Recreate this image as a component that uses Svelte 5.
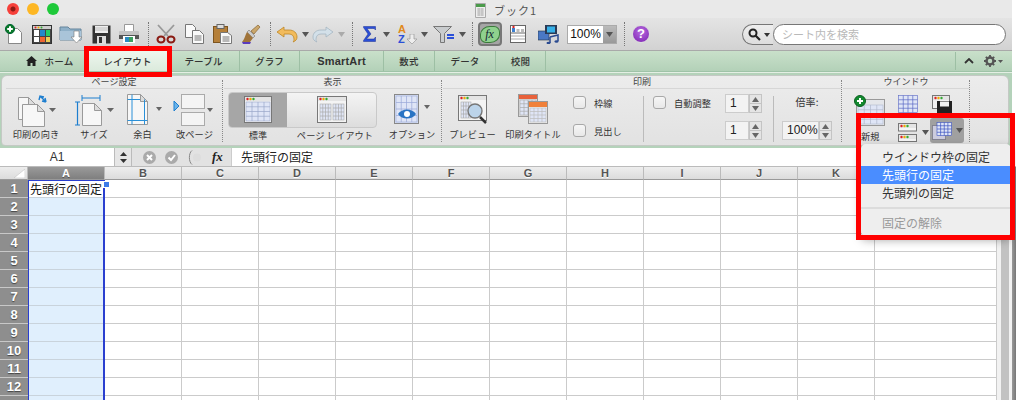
<script>
  const tabs = [
    { label: 'ホーム', cls: 'home' },
    { label: 'レイアウト', cls: 'active' },
    { label: 'テーブル', cls: 'w72' },
    { label: 'グラフ', cls: 'w60' },
    { label: 'SmartArt', cls: 'w84' },
    { label: '数式', cls: 'w51' },
    { label: 'データ', cls: 'w61' },
    { label: '校閲', cls: 'w50' }
  ];
  const cols = ['A', 'B', 'C', 'D', 'E', 'F', 'G', 'H', 'I', 'J', 'K', 'L'];
  const rows = [1, 2, 3, 4, 5, 6, 7, 8, 9, 10, 11, 12, 13];
</script>

{#snippet caret()}
  <svg class="caret" width="7" height="5" viewBox="0 0 7 5"><path d="M0 0h7L3.5 5z" fill="#555" /></svg>
{/snippet}

{#snippet stepper()}
  <div class="stepper">
    <span><svg width="7" height="5" viewBox="0 0 7 5"><path d="M0 5h7L3.5 0z" fill="#666" /></svg></span>
    <span><svg width="7" height="5" viewBox="0 0 7 5"><path d="M0 0h7L3.5 5z" fill="#666" /></svg></span>
  </div>
{/snippet}

{#snippet page(x, y, w, h)}
  <path d="M{x} {y}h{w - 7}l7 7v{h - 7}h-{w}z" fill="#f7f7f7" stroke="#9a9a9a" />
  <path d="M{x + w - 7} {y}v7h7z" fill="#ddd" stroke="#9a9a9a" />
{/snippet}

{#snippet miniWin(x, y, w, h)}
  <rect x={x} y={y} width={w} height={h} fill="#f4f4f4" stroke="#777" />
  <rect x={x + 0.5} y={y + 0.5} width={w - 1} height="4" fill="#e4e4e4" />
  <circle cx={x + 3} cy={y + 2.5} r="1.2" fill="#d22" />
  <circle cx={x + 6} cy={y + 2.5} r="1.2" fill="#ea0" />
  <circle cx={x + 9} cy={y + 2.5} r="1.2" fill="#3a3" />
{/snippet}

{#snippet sheet(x, y, w, h, c)}
  <rect x={x} y={y} width={w} height={h} fill="#dfe5f6" stroke={c} stroke-width="0.6" />
  {#each [0.25, 0.5, 0.75] as f}
    <path d="M{x} {y + h * f}h{w}M{x + w * f} {y}v{h}" stroke={c} stroke-width="0.7" />
  {/each}
{/snippet}

<div class="window">
  <header class="titlebar">
    <div class="lights">
      <i class="l-red"></i><i class="l-yellow"></i><i class="l-green"></i>
    </div>
    <div class="title">
      <svg width="11" height="15" viewBox="0 0 11 15">
        <path d="M.5.5h10v14H.5z" fill="#eee" stroke="#aaa" />
        <path d="M1 1h9v3H1z" fill="#4a9a4a" />
        <path d="M2 6h7M2 8h7M2 10h7M2 12h7M4 5v8M7 5v8" stroke="#aaa" stroke-width=".7" />
      </svg>
      <span>ブック1</span>
    </div>
    <div></div>
  </header>

  <div class="toolbar">
    <!-- new -->
    <div class="tool">
      <svg width="18" height="20" viewBox="0 0 18 20">
        <path d="M3.5 4.5h9l4 4v11h-13z" fill="#fff" stroke="#888" />
        <circle cx="5" cy="5" r="4.6" fill="#0b7a2a" stroke="#063" />
        <path d="M5 2.2v5.6M2.2 5h5.6" stroke="#fff" stroke-width="2" />
      </svg>
    </div>
    <!-- gallery -->
    <div class="tool">
      <svg width="20" height="19" viewBox="0 0 20 19">
        <rect x=".5" y=".5" width="19" height="18" fill="#444" stroke="#333" />
        <rect x="1" y="1" width="18" height="3" fill="#ccc" />
        <circle cx="3.5" cy="2.5" r="1" fill="#d22" /><circle cx="6.5" cy="2.5" r="1" fill="#ea0" /><circle cx="9.5" cy="2.5" r="1" fill="#3a3" />
        <rect x="2" y="5" width="5" height="6" fill="#fff" />
        <rect x="8" y="5" width="5" height="6" fill="#28c" />
        <rect x="14" y="5" width="4" height="6" fill="#2c6" />
        <rect x="2" y="12" width="5" height="5" fill="#fff" />
        <rect x="8" y="12" width="5" height="5" fill="#e63" />
        <rect x="14" y="12" width="4" height="5" fill="#ec5" />
      </svg>
    </div>
    <!-- open -->
    <div class="tool">
      <svg width="26" height="20" viewBox="0 0 26 20">
        <path d="M1 3h8l2 2h11v11H1z" fill="#8fb0c8" stroke="#67859c" />
        <path d="M1 7h21v9H1z" fill="#a9c4d9" />
        <path d="M15 7h5v6h3l-5.500 6L12 13h3z" fill="#fff" stroke="#777" stroke-width=".6" />
      </svg>
    </div>
    <!-- save -->
    <div class="tool">
      <svg width="19" height="19" viewBox="0 0 19 19">
        <path d="M.5.5h18v18H.5z" fill="#333" />
        <path d="M3 1h13v7H3z" fill="#eee" />
        <path d="M3 3h13M3 5h13" stroke="#aaa" stroke-width=".7" />
        <path d="M5 11h9v8H5z" fill="#ddd" /><path d="M7 12h3v6H7z" fill="#333" />
      </svg>
    </div>
    <!-- print -->
    <div class="tool">
      <svg width="20" height="20" viewBox="0 0 20 20">
        <path d="M5.500.5h9v7h-9z" fill="#fff" stroke="#999" />
        <path d="M1 7h18a1 1 0 0 1 1 1v6H0V8a1 1 0 0 1 1-1z" fill="#c4c4c4" />
        <path d="M0 11h20v4H0z" fill="#555" />
        <path d="M4 12h12v7H4z" fill="#fff" />
        <path d="M6 13h4v5H6z" fill="#2a8ac0" /><path d="M10 13h4v5h-4z" fill="#3aa060" />
      </svg>
    </div>
    <div class="dots"></div>
    <!-- cut -->
    <div class="tool">
      <svg width="20" height="20" viewBox="0 0 20 20" fill="none">
        <path d="M2 1l10 11M18 1L8 12" stroke="#999" stroke-width="1.800" />
        <ellipse cx="5" cy="15.500" rx="3.500" ry="3" stroke="#8a1c14" stroke-width="2" />
        <ellipse cx="15" cy="15.500" rx="3.500" ry="3" stroke="#8a1c14" stroke-width="2" />
      </svg>
    </div>
    <!-- copy -->
    <div class="tool">
      <svg width="19" height="20" viewBox="0 0 19 20">
        <path d="M.5.500h7l3 3v10H.5z" fill="#fafafa" stroke="#777" />
        <path d="M7.500 6.500h7l4 4v9h-11z" fill="#fafafa" stroke="#777" />
        <path d="M9.500 12h7M9.500 14h7M9.500 16h7" stroke="#777" />
      </svg>
    </div>
    <!-- paste -->
    <div class="tool">
      <svg width="19" height="20" viewBox="0 0 19 20">
        <rect x=".5" y="2.500" width="14" height="16" fill="#b5803a" stroke="#7d5520" />
        <rect x="4" y=".5" width="7" height="4" fill="#ddd" stroke="#666" />
        <path d="M7.500 8.500h7l4 3v8h-11z" fill="#fafafa" stroke="#777" />
        <path d="M9.500 13h7M9.500 15h7M9.500 17h7" stroke="#777" />
      </svg>
    </div>
    <!-- format brush -->
    <div class="tool">
      <svg width="20" height="20" viewBox="0 0 20 20">
        <path d="M10 7l7-6 2 2-6 7z" fill="#c9a66b" stroke="#7d5520" stroke-width=".6" />
        <path d="M8 6l6 6-2 2-6-6z" fill="#ccc" stroke="#777" stroke-width=".6" />
        <path d="M6 8l6 6-3 4-8 0c3-3 3-7 5-10z" fill="#a0743a" />
        <path d="M1 18h9l-1 2H2z" fill="#5a3bbd" />
      </svg>
    </div>
    <div class="dots"></div>
    <!-- undo -->
    <div class="tool">
      <svg width="22" height="17" viewBox="0 0 22 17">
        <path d="M1 6l7-5v3h5c5 0 8 3 8 7 0 2-1 4-4 5 1-1 1-2 1-3 0-3-2-5-5-5H8v3z" fill="#f2bb5c" stroke="#bd8626" stroke-width=".8" />
      </svg>
    </div>
    <div class="tool">{@render caret()}</div>
    <!-- redo, disabled -->
    <div class="tool">
      <svg width="22" height="17" viewBox="0 0 22 17">
        <path d="M21 6l-7-5v3H9C4 4 1 7 1 11c0 2 1 4 4 5-1-1-1-2-1-3 0-3 2-5 5-5h5v3z" fill="#d3e0e9" stroke="#a6b6c2" stroke-width=".8" />
      </svg>
    </div>
    <div class="tool">
      <svg width="7" height="5" viewBox="0 0 7 5"><path d="M0 0h7L3.500 5z" fill="#aaa" /></svg>
    </div>
    <div class="dots"></div>
    <!-- sigma -->
    <div class="tool">
      <svg width="13" height="16" viewBox="0 0 13 16">
        <path d="M.5.500H12.500V4L11 2.500H4L8 8 3.500 13H11l1.500-2V15.500H.5V14.500L5 8 .5 1.500z" fill="#2a4fd8" stroke="#1a2f90" stroke-width=".5" />
      </svg>
    </div>
    <div class="tool">{@render caret()}</div>
    <!-- sort -->
    <div class="tool sort">
      <span class="a">A</span><span class="z">Z</span>
      <svg width="10" height="10" viewBox="0 0 10 10"><path d="M3 0h4v5h3L5 10 0 5h3z" fill="#eee" stroke="#999" stroke-width=".7" /></svg>
    </div>
    <div class="tool">{@render caret()}</div>
    <!-- filter -->
    <div class="tool">
      <svg width="22" height="17" viewBox="0 0 22 17">
        <path d="M.5.500h18l-7 7v9h-4v-9z" fill="#c9ccce" stroke="#777" />
        <path d="M14 9h7M14 12h7" stroke="#2a4fd8" stroke-width="2" />
      </svg>
    </div>
    <div class="tool">{@render caret()}</div>
    <div class="dots"></div>
    <div class="tool">
      <div class="fx-btn"><span>fx</span></div>
    </div>
    <!-- toolbox -->
    <div class="tool">
      <svg width="16" height="18" viewBox="0 0 16 18">
        <rect x=".5" y=".5" width="15" height="17" fill="#fff" stroke="#666" />
        <path d="M1 8h14" stroke="#666" />
        <path d="M1 11h14M1 14h14" stroke="#aaa" />
        <rect x="2" y="3" width="3" height="4" fill="#3a7fd0" /><rect x="6.500" y="4" width="3" height="3" fill="#bbb" /><rect x="11" y="4" width="3" height="3" fill="#bbb" />
        <circle cx="3.500" cy="2" r="1.200" fill="#d22" />
      </svg>
    </div>
    <!-- media -->
    <div class="tool">
      <svg width="21" height="19" viewBox="0 0 21 19">
        <rect x="0" y="6" width="11" height="9" fill="#4a78c4" stroke="#234" stroke-width=".6" />
        <rect x="7" y="0" width="12" height="9" fill="#2a3a55" />
        <rect x="9" y="1.500" width="8" height="6" fill="#36b0e8" />
        <path d="M12 12l8-2v6M12 12v6" stroke="#2a4a90" stroke-width="1.500" fill="none" />
        <ellipse cx="10.500" cy="18" rx="2" ry="1.200" fill="#2a4a90" /><ellipse cx="18.500" cy="16.500" rx="2" ry="1.200" fill="#2a4a90" />
      </svg>
    </div>
    <div class="combo">
      <span>100%</span>
      <div class="combo-btn">{@render caret()}</div>
    </div>
    <div class="dots"></div>
    <div class="tool">
      <div class="help">?</div>
    </div>
    <div></div>
    <div class="search">
      <div class="search-pill">
        <svg width="15" height="13" viewBox="0 0 15 13" fill="none">
          <circle cx="5" cy="5" r="3.500" stroke="#222" stroke-width="2" />
          <path d="M7.500 7.500L12 12" stroke="#222" stroke-width="2.200" />
        </svg>
        <svg width="6" height="4" viewBox="0 0 6 4"><path d="M0 0h6L3 4z" fill="#333" /></svg>
      </div>
      <div class="search-field">シート内を検索</div>
    </div>
  </div>

  <nav class="tabs">
    {#each tabs as tab}
      <div class="tab {tab.cls}">
        {#if tab.cls === 'home'}
          <svg width="11" height="10" viewBox="0 0 11 10"><path d="M5.500 0L11 5H9.500v5h-3V7h-2v3h-3V5H0z" fill="#222" /></svg>
        {/if}
        <span>{tab.label}</span>
      </div>
    {/each}
    <div class="tabs-end">
      <svg width="10" height="6" viewBox="0 0 10 6" fill="none"><path d="M1 5l4-4 4 4" stroke="#333" stroke-width="1.800" /></svg>
      <div class="gear">
        <svg width="12" height="12" viewBox="0 0 12 12">
          <circle cx="6" cy="6" r="3.500" fill="none" stroke="#555" stroke-width="2.500" />
          <path d="M6 0v12M0 6h12M1.800 1.800l8.400 8.400M10.200 1.800l-8.400 8.400" stroke="#555" stroke-width="1.800" stroke-dasharray="2 8" />
        </svg>
        <svg width="5" height="3" viewBox="0 0 5 3"><path d="M0 0h5L2.500 3z" fill="#555" /></svg>
      </div>
    </div>
  </nav>

  <section class="ribbon-wrap">
    <div class="ribbon">
      <!-- page setup -->
      <div class="group g-page">
        <div class="g-title">ページ設定</div>
        <div class="g-body">
          <div class="item i1">
            <div class="ico">
              <svg width="40" height="34" viewBox="0 0 40 34">
                {@render page(1.500, 3.500, 17, 22)}
                {@render page(5.500, 10.500, 22, 22)}
                <path d="M23 2l5 5M22 6l1-4 4 1M29 8l-1-4M29 8l-4-1" stroke="#1d7ecf" stroke-width="1.400" fill="none" />
                <path d="M32 14h7l-3.500 4z" fill="#666" />
              </svg>
            </div>
            <label>印刷の向き</label>
          </div>
          <div class="item i2">
            <div class="ico">
              <svg width="40" height="34" viewBox="0 0 40 34" fill="none">
                <path d="M8 1v6M26 1v6M8 4h18" stroke="#1d7ecf" />
                <path d="M1 8h5M1 31h5M3.500 8v23" stroke="#1d7ecf" stroke-width="1.200" />
                {@render page(8.500, 9.500, 19, 22)}
                <path d="M33 14h7l-3.500 4z" fill="#666" />
              </svg>
            </div>
            <label>サイズ</label>
          </div>
          <div class="item i3">
            <div class="ico">
              <svg width="38" height="32" viewBox="0 0 38 32" fill="none">
                {@render page(3.500, .5, 20, 30)}
                <path d="M8 .5v30M20.500 5.500v25M3.500 5.500H16M3.500 26.500h20" stroke="#2a90d8" />
                <path d="M32 13h6l-3 4z" fill="#666" />
              </svg>
            </div>
            <label>余白</label>
          </div>
          <div class="item i4">
            <div class="ico">
              <svg width="40" height="34" viewBox="0 0 40 34" fill="none">
                <rect x="8.500" y=".5" width="23" height="14" fill="#f4f4f4" stroke="#aaa" />
                <rect x="8.500" y="18.500" width="23" height="13" fill="#f4f4f4" stroke="#aaa" />
                <path d="M1 7l5 5-5 5z" fill="#6bb4ea" stroke="#1d7ecf" />
                <path d="M34 14h6l-3 4z" fill="#666" />
              </svg>
            </div>
            <label>改ページ</label>
          </div>
        </div>
      </div>
      <div class="dotted"></div>

      <!-- view -->
      <div class="group g-view">
        <div class="g-title">表示</div>
        <div class="g-body">
          <div class="segment">
            <div class="seg on">
              <svg width="28" height="28" viewBox="0 0 28 28">
                {@render miniWin(.5, .5, 27, 26)}
                {@render sheet(2, 6, 24, 19, '#9aa6c8')}
              </svg>
            </div>
            <div class="seg wide">
              <svg width="30" height="28" viewBox="0 0 30 28">
                {@render miniWin(.5, .5, 29, 26)}
                {@render sheet(3, 8, 11, 16, '#aaa')}
                {@render sheet(16, 8, 11, 16, '#aaa')}
              </svg>
            </div>
          </div>
          <div class="seg-labels">
            <label class="l-std">標準</label>
            <label class="l-layout">ページ レイアウト</label>
          </div>
          <div class="item i-opt">
            <div class="ico">
              <svg width="40" height="30" viewBox="0 0 40 30">
                <rect x=".5" y=".5" width="24" height="29" fill="#d8e0f4" stroke="#888" />
                {@render sheet(2, 2, 21, 26, '#99a8d8')}
                <path d="M4 20c4-6 14-6 18 0-4 6-14 6-18 0z" fill="#2a74c4" />
                <circle cx="13" cy="20" r="3" fill="#fff" />
                <path d="M30 11h6l-3 4z" fill="#666" />
              </svg>
            </div>
            <label>オプション</label>
          </div>
        </div>
      </div>
      <div class="dotted"></div>

      <!-- print -->
      <div class="group g-print">
        <div class="g-title">印刷</div>
        <div class="g-body">
          <div class="item i-prev">
            <div class="ico">
              <svg width="30" height="32" viewBox="0 0 30 32">
                {@render miniWin(.5, 1.500, 28, 25)}
                {@render sheet(3, 8, 10, 16, '#aaa')}
                <circle cx="17" cy="17" r="7" fill="#bcd4ea" stroke="#777" stroke-width="1.400" />
                <path d="M22 23l6 6" stroke="#333" stroke-width="2.500" />
              </svg>
            </div>
            <label>プレビュー</label>
          </div>
          <div class="item i-titles">
            <div class="ico">
              <svg width="30" height="30" viewBox="0 0 30 30">
                <rect x=".5" y=".5" width="19" height="22" fill="#ddd" stroke="#999" />
                <rect x="1" y="1" width="18" height="4" fill="#e8623c" />
                {@render sheet(2, 6, 16, 15, '#aaa')}
                <rect x="10.500" y="7.500" width="19" height="22" fill="#eee" stroke="#999" />
                <rect x="11" y="8" width="18" height="5" fill="#f0803a" />
                {@render sheet(12, 14, 16, 14, '#bbb')}
              </svg>
            </div>
            <label>印刷タイトル</label>
          </div>
          <div class="checks">
            <div class="check"><i></i><label>枠線</label></div>
            <div class="check"><i></i><label>見出し</label></div>
          </div>
          <div class="vline"></div>
          <div class="check auto"><i></i><label>自動調整</label></div>
          <div class="spins">
            <div class="spin"><span class="num">1</span>{@render stepper()}</div>
            <div class="spin"><span class="num">1</span>{@render stepper()}</div>
          </div>
          <div class="vline"></div>
          <div class="scale">
            <label>倍率:</label>
            <div class="spin"><span class="num wide-num">100%</span>{@render stepper()}</div>
          </div>
        </div>
      </div>
      <div class="dotted"></div>

      <!-- window -->
      <div class="group g-window">
        <div class="g-title">ウインドウ</div>
        <div class="win-body">
          <div class="win-new">
            <svg width="32" height="31" viewBox="0 0 32 31">
              <rect x="3.500" y="4.500" width="28" height="26" fill="#e4e6ea" stroke="#999" />
              {@render sheet(5, 10, 25, 19, '#b0b8cc')}
              <circle cx="7" cy="6" r="5.500" fill="#12892f" stroke="#0a6020" />
              <path d="M7 3v6M4 6h6" stroke="#fff" stroke-width="2" />
            </svg>
            <label>新規</label>
          </div>
          <div class="win-grid">
            <svg class="wg1" width="20" height="18" viewBox="0 0 20 18">{@render sheet(.5, .5, 19, 17, '#5a68c4')}</svg>
            <svg class="wg2" width="21" height="18" viewBox="0 0 21 18">
              {@render miniWin(.5, .5, 17, 13)}
              <path d="M5 6h15v12H5z" fill="#222" /><path d="M8 6.500h9v5H8z" fill="#f2f2f2" />
            </svg>
            <div class="wg3">
              <svg width="19" height="19" viewBox="0 0 19 19">
                {@render miniWin(.5, .5, 18, 7.500)}
                {@render miniWin(.5, 11.500, 18, 7)}
              </svg>
              {@render caret()}
            </div>
            <div class="freeze">
              <svg width="20" height="18" viewBox="0 0 20 18">
                <rect x=".5" y="3.500" width="13" height="14" fill="#ccd" stroke="#556" stroke-dasharray="1 1" />
                {@render sheet(5, .5, 14.500, 13, '#3a50c0')}
              </svg>
              {@render caret()}
            </div>
          </div>
        </div>
      </div>
      <div class="dotted"></div>
    </div>
  </section>

  <div class="formula">
    <div class="namebox">A1</div>
    <div class="name-step">
      <svg width="7" height="11" viewBox="0 0 7 11"><path d="M0 4h7L3.500 0zM0 7h7l-3.500 4z" fill="#333" /></svg>
    </div>
    <div class="f-tools">
      <svg width="13" height="13" viewBox="0 0 13 13"><circle cx="6.500" cy="6.500" r="6.500" fill="#aaa" /><path d="M4 4l5 5M9 4l-5 5" stroke="#fff" stroke-width="2" /></svg>
      <svg width="13" height="13" viewBox="0 0 13 13"><circle cx="6.500" cy="6.500" r="6.500" fill="#aaa" /><path d="M3.500 6.500l2.500 2.500 4-5" stroke="#fff" stroke-width="2" fill="none" /></svg>
      <svg width="18" height="15" viewBox="0 0 18 15" fill="none"><path d="M5 .5C1.500 3 1.500 12 5 14.500" stroke="#888" /><circle cx="10" cy="7.500" r="4" fill="#ddd" /></svg>
      <span class="f-fx">fx</span>
    </div>
    <div class="f-input">先頭行の固定</div>
  </div>

  <div class="sheet-wrap">
    <div class="sheet">
      <div class="corner">
        <svg width="11" height="9" viewBox="0 0 11 9"><path d="M11 0v9H0z" fill="#fff" stroke="#bbb" stroke-width=".5" /></svg>
      </div>
      {#each cols as col, i}
        <div class="col-head" class:on={i === 0}>{col}</div>
      {/each}
      {#each rows as row}
        <div class="row-head">{row < 13 ? row : ''}</div>
        {#each cols as col, i}
          <div class="cell" class:sel={i === 0} class:first={i === 0 && row === 1}>
            {#if i === 0 && row === 1}先頭行の固定{/if}
          </div>
        {/each}
      {/each}
      <div class="sel-box"></div>
      <div class="sel-handle"></div>
    </div>
    <div class="scrollbar"><div class="thumb"></div></div>
    <div class="edge"></div>
  </div>

  <div class="menu">
    <div class="m-item">ウインドウ枠の固定</div>
    <div class="m-item hot">先頭行の固定</div>
    <div class="m-item">先頭列の固定</div>
    <div class="m-sep"></div>
    <div class="m-item off">固定の解除</div>
  </div>

  <div class="mark r-tab"></div>
  <div class="mark r-menu"></div>
</div>

<style>
  :global(body) {
    margin: 0;
    background: #fff;
  }

  .window {
    position: relative;
    width: 1016px;
    height: 400px;
    overflow: hidden;
    font-family: "Noto Sans CJK JP", "Liberation Sans", sans-serif;
    color: #333;
  }

  label {
    display: block;
  }

  /* title + toolbar, the window itself stops 4px short of the right edge */
  .titlebar,
  .toolbar,
  .tabs,
  .ribbon-wrap {
    margin-right: 4px;
  }

  .titlebar {
    height: 18px;
    display: grid;
    grid-template-columns: 1fr auto 1fr;
    background: #e9e9e9;
  }

  .lights {
    display: flex;
    gap: 8px;
    padding: 3px 0 0 7px;
  }

  .lights i {
    width: 12px;
    height: 12px;
    border-radius: 50%;
  }

  .l-red {
    background: radial-gradient(circle, #8c1a14 0 2px, #f6403a 3px);
  }

  .l-yellow {
    background: #fdb724;
  }

  .l-green {
    background: #1ec93a;
  }

  .title {
    display: flex;
    align-items: center;
    gap: 8px;
    font-size: 11px;
    letter-spacing: 1px;
    color: #555;
    padding-top: 2px;
  }

  .toolbar {
    height: 33px;
    display: grid;
    grid-template-columns: 28px 28px 32px 26px 30px 8px 27px 30px 26px 32px 6px 28px 8px 28px 8px 14px 20px 14px 24px 14px 26px 10px 10px 25px 32px 28px 55px 14px 20px 1fr 264px;
    align-items: center;
    background: linear-gradient(#e4e4e4, #d2d2d2);
    border-bottom: 1px solid #a9a9a9;
    box-sizing: border-box;
    padding-right: 6px;
  }

  .tool {
    display: flex;
    align-items: center;
    justify-content: center;
    position: relative;
    height: 100%;
  }

  .dots {
    justify-self: center;
    height: 24px;
    border-left: 1px dotted #777;
  }

  .sort {
    font: bold 11px/10px "Liberation Sans", sans-serif;
  }

  .sort .a,
  .sort .z {
    position: absolute;
    left: 5px;
  }

  .sort .a {
    top: 6px;
    color: #e08a1c;
  }

  .sort .z {
    top: 16px;
    color: #2a4fd8;
  }

  .sort svg {
    margin: 9px 0 0 14px;
  }

  .fx-btn {
    width: 24px;
    height: 24px;
    box-sizing: border-box;
    border: 2px solid #777;
    border-radius: 4px;
    background: #a5a5a5;
    display: flex;
    align-items: center;
    justify-content: center;
  }

  .fx-btn span {
    width: 18px;
    height: 15px;
    border-radius: 50% 6px 50% 6px;
    background: #8fd18e;
    border: 1px solid #3b7a3b;
    font: italic 12px/14px "Liberation Serif", serif;
    text-align: center;
    color: #123;
  }

  .combo {
    justify-self: end;
    width: 50px;
    height: 19px;
    display: flex;
    border: 1px solid #aaa;
    box-sizing: border-box;
    background: #fff;
    font: 12px/17px "Liberation Sans", sans-serif;
    color: #111;
  }

  .combo span {
    width: 35px;
    text-align: center;
  }

  .combo-btn {
    flex: 1;
    background: linear-gradient(#bbb, #999);
    display: flex;
    align-items: center;
    justify-content: center;
  }

  .help {
    width: 18px;
    height: 18px;
    border-radius: 50%;
    background: radial-gradient(circle at 50% 35%, #b86be0, #7a1fb0);
    border: 1px solid #ddd;
    box-sizing: border-box;
    color: #fff;
    font: bold 13px/16px "Liberation Sans", sans-serif;
    text-align: center;
  }

  .search {
    display: flex;
    height: 21px;
    margin-top: 1px;
  }

  .search-pill {
    width: 31px;
    display: flex;
    align-items: center;
    gap: 1px;
    padding-left: 5px;
    box-sizing: border-box;
    border: 1px solid #777;
    border-right: 0;
    border-radius: 11px 0 0 11px;
    background: linear-gradient(#eee, #ddd);
  }

  .search-field {
    flex: 1;
    margin-left: 0;
    border: 1px solid #777;
    border-radius: 11px;
    background: #fff;
    font-size: 11px;
    line-height: 19px;
    padding-left: 8px;
    color: #b9b9b9;
  }

  /* tabs */
  .tabs {
    height: 21px;
    display: flex;
    background: linear-gradient(#c9e0ca, #b3d1b8);
    border-bottom: 1px solid #9fc3a8;
    box-sizing: border-box;
  }

  .tab {
    display: flex;
    align-items: center;
    justify-content: center;
    box-sizing: border-box;
    border-right: 1px solid #9dbfa4;
    font-size: 9.500px;
    font-weight: 500;
    color: #333;
    letter-spacing: .2px;
  }

  .home {
    width: 88px;
    gap: 8px;
    padding-left: 12px;
  }

  .active {
    width: 80px;
    background: linear-gradient(#eef6ee, #dbeadc);
  }

  .w72 {
    width: 72px;
  }

  .w60 {
    width: 60px;
  }

  .w84 {
    width: 84px;
    font-family: "Liberation Sans", sans-serif;
    font-weight: 700;
    font-size: 11px;
  }

  .w51 {
    width: 51px;
  }

  .w61 {
    width: 61px;
  }

  .w50 {
    width: 50px;
  }

  .tabs-end {
    margin-left: auto;
    width: 57px;
    display: flex;
    align-items: center;
    gap: 10px;
    padding-left: 8px;
    box-sizing: border-box;
    border-left: 1px solid #9dbfa4;
    height: 18px;
    margin-top: 1px;
  }

  .gear {
    display: flex;
    align-items: center;
    gap: 2px;
  }

  /* ribbon */
  .ribbon-wrap {
    height: 76px;
    box-sizing: border-box;
    background: #b4d2ba;
    padding: 2px 3px 2px 1px;
    border-top: 1px solid #e4efe4;
  }

  .ribbon {
    height: 100%;
    display: flex;
    box-sizing: border-box;
    background: linear-gradient(#ececec, #e2e2e2);
    border: 1px solid #c4c9c4;
    border-radius: 6px 6px 4px 4px;
    padding-left: 4px;
  }

  .group {
    display: flex;
    flex-direction: column;
  }

  .g-title {
    height: 12px;
    margin: 0 0;
    font-size: 9px;
    line-height: 11px;
    text-align: center;
    color: #444;
    border-bottom: 1px solid #d6d6d6;
    flex: none;
  }

  .g-body {
    flex: 1;
    display: flex;
    position: relative;
  }

  .g-page {
    width: 216px;
  }

  .g-view {
    width: 217px;
  }

  .g-print {
    width: 398px;
  }

  .g-window {
    width: 126px;
  }

  .dotted {
    border-left: 1px dotted #888;
    margin: 4px 0 3px;
    width: 1px;
    flex: none;
  }

  .item {
    display: flex;
    flex-direction: column;
    align-items: center;
    flex: none;
    position: relative;
  }

  .item label,
  .seg-labels label,
  .win-new label,
  .check label,
  .scale label {
    font-size: 9.200px;
    line-height: 12px;
    color: #333;
    white-space: nowrap;
    letter-spacing: .1px;
  }

  .ico {
    height: 34px;
    padding-top: 5px;
    display: flex;
    align-items: flex-start;
  }

  .i1 {
    width: 56px;
    margin-left: 2px;
  }

  .i2 {
    width: 60px;
  }

  .i3 {
    width: 37px;
  }

  .i4 {
    width: 61px;
    margin-left: 3px;
  }

  .i1 .ico svg {
    margin-left: 1px;
  }

  .i4 .ico svg {
    margin-left: -4px;
  }

  .segment {
    position: absolute;
    left: 4px;
    top: 3px;
    display: flex;
    width: 149px;
    height: 36px;
    border: 1px solid #c9c9c9;
    border-radius: 4px;
    box-sizing: border-box;
    background: linear-gradient(#f4f4f4, #ddd);
    overflow: hidden;
  }

  .seg {
    width: 58px;
    display: flex;
    align-items: center;
    justify-content: center;
  }

  .seg.on {
    background: #a6a6a6;
  }

  .seg.wide {
    flex: 1;
  }

  .seg-labels {
    position: absolute;
    left: 0;
    top: 40px;
    display: flex;
  }

  .l-std {
    width: 68px;
    text-align: center;
  }

  .l-layout {
    width: 86px;
    text-align: center;
  }

  .i-opt {
    position: absolute;
    left: 160px;
    width: 56px;
  }

  .i-opt .ico {
    padding-left: 4px;
  }

  .i-prev {
    width: 59px;
  }

  .i-titles {
    width: 62px;
  }

  .checks {
    display: flex;
    flex-direction: column;
    gap: 15px;
    padding: 7px 0 0 9px;
    width: 79px;
    box-sizing: border-box;
  }

  .check {
    display: flex;
    align-items: center;
    gap: 8px;
    height: 13px;
  }

  .check i {
    width: 13px;
    height: 13px;
    box-sizing: border-box;
    border: 1px solid #a8a8a8;
    border-radius: 3px;
    background: linear-gradient(#f6f6f6, #e8e8e8);
    flex: none;
  }

  .vline {
    width: 1px;
    height: 46px;
    margin-top: 7px;
    background: #bbb;
    flex: none;
  }

  .auto {
    margin: 7px 0 0 9px;
    width: 72px;
  }

  .spins {
    display: flex;
    flex-direction: column;
    gap: 8px;
    padding-top: 5px;
    width: 48px;
  }

  .spin {
    display: flex;
    height: 19px;
  }

  .num {
    width: 24px;
    height: 19px;
    box-sizing: border-box;
    border: 1px solid #ccc;
    background: #f3f3f3;
    font: 12px/17px "Liberation Sans", sans-serif;
    padding-left: 4px;
    color: #222;
  }

  .wide-num {
    width: 37px;
  }

  .stepper {
    width: 13px;
    display: flex;
    flex-direction: column;
    border: 1px solid #c4c4c4;
    box-sizing: border-box;
    background: #e4e4e4;
  }

  .stepper span {
    flex: 1;
    display: flex;
    align-items: center;
    justify-content: center;
    border-bottom: 1px solid #c4c4c4;
  }

  .stepper span:last-child {
    border-bottom: 0;
  }

  .scale {
    padding: 7px 0 0 8px;
    display: flex;
    flex-direction: column;
    align-items: center;
    gap: 13px;
  }

  .scale label {
    font-size: 10px;
  }

  .win-body {
    flex: 1;
    display: flex;
    padding: 6px 0 0 10px;
  }

  .win-new label {
    margin: -1px 0 0 8px;
  }

  .win-grid {
    display: grid;
    grid-template-columns: 34px 34px;
    grid-auto-rows: auto;
    margin-left: 13px;
    align-content: start;
    row-gap: 9px;
  }

  .wg3 {
    display: flex;
    align-items: center;
    gap: 5px;
  }

  .freeze {
    display: flex;
    align-items: center;
    justify-content: center;
    gap: 4px;
    width: 34px;
    height: 25px;
    margin: -4px 0 0 -2px;
    border-radius: 3px;
    background: #a0a0a0;
  }

  /* formula bar */
  .formula {
    height: 19px;
    display: flex;
    background: #fff;
    border-bottom: 1px solid #bbb;
    box-sizing: border-box;
    font-size: 12px;
    line-height: 18px;
  }

  .namebox {
    width: 114px;
    text-align: center;
    font-family: "Liberation Sans", sans-serif;
  }

  .name-step {
    width: 18px;
    background: #e6e6e6;
    display: flex;
    align-items: center;
    justify-content: center;
    border-left: 1px solid #bbb;
    border-right: 1px solid #bbb;
    box-sizing: border-box;
  }

  .f-tools {
    width: 100px;
    background: #e2e2e2;
    display: flex;
    align-items: center;
    gap: 9px;
    padding-left: 11px;
    box-sizing: border-box;
    border-right: 1px solid #ccc;
  }

  .f-fx {
    font: italic bold 13px "Liberation Serif", serif;
    color: #222;
    margin-left: -2px;
  }

  .f-input {
    flex: 1;
    padding-left: 9px;
    color: #222;
  }

  /* grid */
  .sheet-wrap {
    height: 233px;
    display: flex;
    overflow: hidden;
  }

  .sheet {
    position: relative;
    display: grid;
    grid-template-columns: 28px repeat(11, 77px) 122px;
    grid-template-rows: 13px repeat(13, 18px);
    width: 997px;
    flex: none;
    border-right: 1px solid #888;
    box-sizing: border-box;
  }

  .corner {
    background: linear-gradient(#ededed, #dcdcdc);
    border-bottom: 1px solid #999;
    border-right: 1px solid #bbb;
    box-sizing: border-box;
    display: flex;
    align-items: flex-end;
    justify-content: flex-end;
    padding: 0 2px 1px 0;
  }

  .col-head {
    background: linear-gradient(#eee, #dcdcdc);
    border-bottom: 1px solid #999;
    border-right: 1px solid #bbb;
    box-sizing: border-box;
    font: bold 11px/12px "Liberation Sans", sans-serif;
    text-align: center;
    color: #555;
    text-shadow: 0 1px 0 #fff;
  }

  .col-head.on {
    background: linear-gradient(#9a9a9a, #7f7f7f);
    color: #fff;
    text-shadow: 0 1px 0 #555;
  }

  .row-head {
    background: #8e8e8e;
    border-bottom: 1px solid #c8c8c8;
    box-sizing: border-box;
    font: bold 13px/17px "Liberation Sans", sans-serif;
    text-align: center;
    color: #fff;
    text-shadow: 0 1px 1px #444;
  }

  .cell {
    background: #fff;
    border-right: 1px solid #cbcbcb;
    border-bottom: 1px solid #cbcbcb;
    box-sizing: border-box;
    font-size: 12px;
    line-height: 17px;
    color: #111;
    white-space: nowrap;
    overflow: hidden;
  }

  .cell.sel {
    background: #e0effd;
    border-right: 0;
    border-bottom-color: #c9d3dc;
  }

  .cell.first {
    background: #fff;
    padding-left: 2px;
  }

  .sel-box {
    position: absolute;
    left: 28px;
    top: 13px;
    width: 77px;
    height: 240px;
    box-sizing: border-box;
    border-style: solid;
    border-color: #2a3fd0;
    border-width: 1px 2px 0 1px;
    pointer-events: none;
  }

  .sel-handle {
    position: absolute;
    left: 103px;
    top: 14px;
    width: 5px;
    height: 5px;
    background: #3d7be8;
    border: 1px solid #fff;
  }

  .scrollbar {
    width: 15px;
    background: #f2f2f2;
    display: flex;
    padding-left: 4px;
    box-sizing: border-box;
  }

  .thumb {
    width: 8px;
    background: #c2c2c2;
  }

  .edge {
    flex: 1;
    background: linear-gradient(90deg, #9a9a9a, #777);
  }

  /* overlays */
  .menu {
    position: absolute;
    left: 861px;
    top: 144px;
    width: 150px;
    height: 92px;
    padding-top: 4px;
    box-sizing: border-box;
    background: #eee;
    border-radius: 5px;
    box-shadow: 0 4px 10px rgba(0, 0, 0, .35);
  }

  .m-item {
    height: 18px;
    padding-left: 21px;
    font-size: 12px;
    line-height: 18px;
    color: #333;
  }

  .m-item.hot {
    background: #4a8dff;
    color: #fff;
  }

  .m-item.off {
    color: #999;
  }

  .m-sep {
    height: 2px;
    margin: 5px 0 5px;
    background: #dcdcdc;
  }

  .mark {
    position: absolute;
    box-sizing: border-box;
    border: 5px solid #f00;
    pointer-events: none;
  }

  .r-tab {
    left: 84px;
    top: 46px;
    width: 88px;
    height: 31px;
  }

  .r-menu {
    left: 856px;
    top: 113px;
    width: 159px;
    height: 127px;
  }
</style>
